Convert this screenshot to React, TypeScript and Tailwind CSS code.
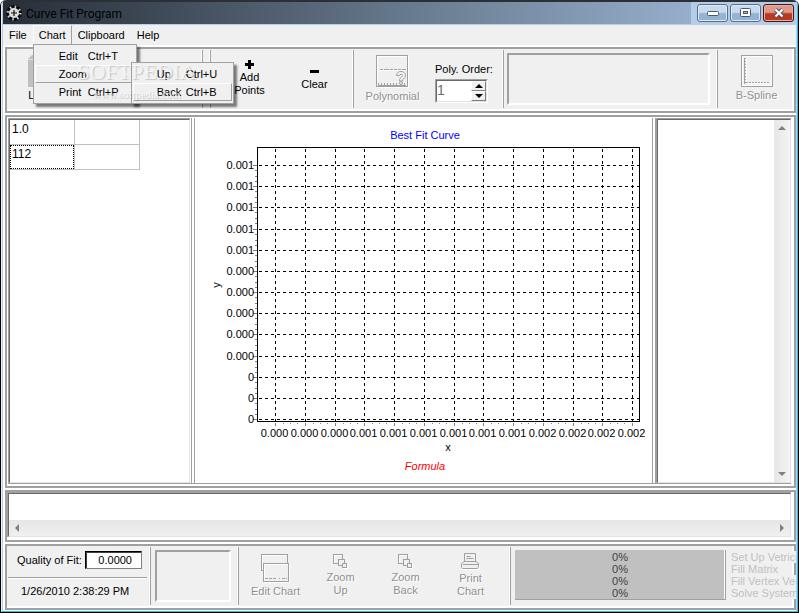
import React from 'react';
import clsx from 'clsx';

interface MenuItem {
  label: string;
  shortcut?: string;
  raised?: boolean;
  children?: MenuItem[];
}

const chartMenu: MenuItem[] = [
  { label: 'Edit', shortcut: 'Ctrl+T' },
  {
    label: 'Zoom',
    raised: true,
    children: [
      { label: 'Up', shortcut: 'Ctrl+U' },
      { label: 'Back', shortcut: 'Ctrl+B', raised: true }
    ]
  },
  { label: 'Print', shortcut: 'Ctrl+P' }
];

const xLabels = ['0.000', '0.000', '0.000', '0.001', '0.001', '0.001', '0.001', '0.001', '0.001', '0.002', '0.002', '0.002', '0.002'];
const yLabels = ['0.001', '0.001', '0.001', '0.001', '0.001', '0.000', '0.000', '0.000', '0.000', '0.000', '0', '0', '0'];
const steps = ['Set Up Vetrices', 'Fill Matrix', 'Fill Vertex Vectors', 'Solve System'];

const GearIcon = () => (
  <svg width="16" height="16" viewBox="0 0 16 16" aria-hidden="true">
    <circle cx="8" cy="8" r="6.5" fill="none" stroke="#0c0c0c" strokeWidth="3" />
    <circle cx="8" cy="8" r="6" fill="none" stroke="#c8c8c8" strokeWidth="3" strokeDasharray="1.5 3.2" />
    <circle cx="8" cy="8" r="5" fill="#dcdcdc" />
    <path d="M8 5v6M5 8h6" stroke="#111" strokeWidth="1.2" />
  </svg>
);

const LinearIcon = () => (
  <svg width="32" height="32" viewBox="0 0 32 32" aria-hidden="true">
    <path d="M0 4l4-4h28v32H0z" fill="#c0c0c0" />
    <path d="M0.5 4.5h28v27" fill="none" stroke="#e3e3e3" />
  </svg>
);

const PolynomialIcon = () => (
  <svg width="33" height="33" viewBox="0 0 33 33" aria-hidden="true" shapeRendering="crispEdges">
    <rect x="1.5" y="1.5" width="31" height="31" fill="none" stroke="#fff" />
    <rect x="0.5" y="0.5" width="31" height="31" rx="1" fill="none" stroke="#a0a0a0" />
    <path d="M4 15.5h25" stroke="#fff" />
    <path d="M4 14.5h3m1 0h5m1 0h3m1 0h3m1 0h3m1 0h4" stroke="#a0a0a0" />
    <path d="M2 30.5h28" stroke="#a0a0a0" />
    <path d="M2.5 28v2m3-2v2m3-2v2m3-2v2m3-2v2m3-2v2m3-2v2m8-2v2" stroke="#a0a0a0" />
    <g shapeRendering="auto" fill="none" stroke="#a0a0a0">
      <path d="M20.500 20.500c0-5.500 9-5.500 9 0 0 3-3 3-3 5.500h-3c0-4 3-4 3-5.500s-3-1.500-3 0z" />
      <circle cx="25" cy="28" r="1.500" />
    </g>
  </svg>
);

const SplineIcon = () => (
  <svg width="32" height="32" viewBox="0 0 32 32" aria-hidden="true" shapeRendering="crispEdges">
    <rect x="1.5" y="1.5" width="29" height="29" fill="none" stroke="#fff" />
    <rect x="0.5" y="0.5" width="31" height="31" rx="1" fill="none" stroke="#a0a0a0" />
    <path d="M5.500 3v25.500H29" fill="none" stroke="#fff" />
    <path d="M3.500 3v26" stroke="#a0a0a0" />
    <path d="M4.500 3v26" stroke="#a0a0a0" strokeDasharray="1 2" />
    <path d="M5 27.500h24" stroke="#a0a0a0" strokeDasharray="2 1" />
  </svg>
);

const EditChartIcon = () => (
  <svg width="29" height="29" viewBox="0 0 29 29" aria-hidden="true" shapeRendering="crispEdges">
    <g fill="none" stroke="#fff">
      <path d="M1.500 18V1.500h25v8" />
      <rect x="3.500" y="10.500" width="25" height="18" />
    </g>
    <g fill="none" stroke="#a0a0a0">
      <path d="M2 16.500H0.500V0.500h26v9" />
      <rect x="2.500" y="9.500" width="25" height="18" />
      <path d="M4 24.500h3m1 0h3m1 0h3m3 0h1m2 0h3m1 0h1" />
    </g>
  </svg>
);

const ZoomIcon = () => (
  <svg width="15" height="15" viewBox="0 0 15 15" aria-hidden="true" shapeRendering="crispEdges">
    <g fill="#f0f0f0" stroke="#a0a0a0">
      <rect x="0.500" y="0.500" width="9" height="9" />
      <rect x="5.500" y="5.500" width="6" height="6" />
      <rect x="9.500" y="9.500" width="4" height="4" />
    </g>
    <path d="M1.500 8.500v-7h7M14.500 10v4.500H10" fill="none" stroke="#fff" />
  </svg>
);

const PrintIcon = () => (
  <svg width="19" height="17" viewBox="0 0 19 17" aria-hidden="true">
    <path d="M1.500 16.500h16l1-1v-4" fill="none" stroke="#fff" />
    <g fill="none" stroke="#a0a0a0">
      <path d="M3.500 8.500V0.500h11v8M5.500 3.500h4M5.500 5.500h7M3 8.500h12l2.500 2v4l-1 1H1.500l-1-1v-4z" />
      <path d="M2 11.500h15" />
    </g>
  </svg>
);

const Arrow = ({ d, color = '#808080' }: { d: string; color?: string }) => (
  <svg width="8" height="8" viewBox="0 0 8 8" aria-hidden="true">
    <path d={d} fill={color} />
  </svg>
);

const ToolButton = ({
  icon,
  disabled,
  children
}: {
  icon: React.ReactNode;
  disabled?: boolean;
  children: React.ReactNode;
}) => (
  <button
    disabled={disabled}
    className={clsx(
      'flex w-[65px] shrink-0 flex-col items-center justify-center gap-0.5 pb-px text-center leading-[13px]',
      disabled && 'text-[#909090] [text-shadow:1px_1px_0_white]'
    )}
  >
    {icon}
    <span className="whitespace-pre-line">{children}</span>
  </button>
);

// Toolbar section closed by an etched line on the right
const Section = ({ className, children }: { className?: string; children?: React.ReactNode }) => (
  <div className={clsx('my-px flex border-r border-[#a0a0a0] shadow-[inset_-1px_0_0_white]', className)}>{children}</div>
);

const ToolFrame = ({ children }: { children: React.ReactNode }) => (
  <div className="border-2 border-[#a0a0a0]">
    <div className="flex h-[62px] border-r-2 border-b-2 border-white bg-[#f0f0f0]">{children}</div>
  </div>
);

const SunkenBox = ({ className }: { className?: string }) => (
  <div className={clsx('my-[3px] border-2 border-t-[#a0a0a0] border-r-white border-b-white border-l-[#a0a0a0]', className)} />
);

const MenuList = ({ items, className }: { items: MenuItem[]; className?: string }) => (
  <ul
    className={clsx(
      'absolute z-10 border border-[#a0a0a0] bg-[#f0f0f0] px-px py-0.5 shadow-[3px_3px_2px_#00000080]',
      className
    )}
  >
    {items.map((item) => (
      <li key={item.label} className="relative">
        <button
          className={clsx(
            'flex h-[18px] w-full items-center border pl-[23px] text-left whitespace-nowrap',
            item.raised ? 'border-t-white border-r-[#a0a0a0] border-b-[#a0a0a0] border-l-white' : 'border-transparent'
          )}
        >
          <span className="w-[29px]">{item.label}</span>
          {item.shortcut}
          {item.children && (
            <span className="ml-auto pr-1">
              <Arrow d="M2 0l4 4-4 4z" color="#fff" />
            </span>
          )}
        </button>
        {item.children && <MenuList items={item.children} className="-top-[3px] left-24 w-[103px]" />}
      </li>
    ))}
  </ul>
);

const TitleBar = () => (
  <header className="flex h-[25px] items-center border-t-2 border-b border-t-[#2b2f38] border-b-[#b8cfe8] bg-linear-to-r from-[#272e38] via-[#66788c] to-[#a9c3e3] pl-[3px]">
    <GearIcon />
    <h1 className="flex-1 pt-px pl-1 font-[Roboto,'Noto_Sans',sans-serif] text-[12px] leading-4 text-black">
      Curve Fit Program
    </h1>
    <div className="flex h-full items-center gap-0.5 bg-[#b4cce6] pr-0.5 pl-1.5">
      <button
        aria-label="Minimize"
        className="flex h-[18px] w-[31px] items-center justify-center rounded-[3px] border border-[#5a6f8a] bg-linear-to-b from-[#c8dbee] from-45% to-[#94b3d2] to-55% shadow-[inset_0_0_0_1px_#dceaf7]"
      >
        <svg width="12" height="6" viewBox="0 0 12 6">
          <rect x="0.500" y="1.500" width="11" height="4" rx="1" fill="#fff" stroke="#4b5868" />
        </svg>
      </button>
      <button
        aria-label="Maximize"
        className="flex h-[18px] w-[31px] items-center justify-center rounded-[3px] border border-[#5a6f8a] bg-linear-to-b from-[#c8dbee] from-45% to-[#94b3d2] to-55% shadow-[inset_0_0_0_1px_#dceaf7]"
      >
        <svg width="12" height="10" viewBox="0 0 12 10">
          <rect x="0.500" y="0.500" width="10" height="8" rx="1" fill="#fff" stroke="#4b5868" />
          <rect x="3.500" y="3.500" width="4" height="2" fill="#9bb8d5" stroke="#4b5868" />
        </svg>
      </button>
      <button
        aria-label="Close"
        className="flex h-[18px] w-[31px] items-center justify-center rounded-[3px] border border-[#4c1210] bg-linear-to-b from-[#dd9a8b] from-45% to-[#b93a24] to-55% shadow-[inset_0_0_0_1px_#e8b0a4]"
      >
        <svg width="12" height="10" viewBox="0 0 12 10">
          <path d="M2.500 1.500l7 7m0-7l-7 7" stroke="#4b4f5c" strokeWidth="4" />
          <path d="M2.500 1.500l7 7m0-7l-7 7" stroke="#fff" strokeWidth="2.200" />
        </svg>
      </button>
    </div>
  </header>
);

const MenuBar = () => (
  <nav className="flex h-5 bg-[#f0f0f0] text-black">
    <button className="px-1.5">File</button>
    <div className="relative flex">
      <button className="border-t border-r border-l border-t-white border-r-[#a0a0a0] border-l-white px-[5px] pb-px">
        Chart
      </button>
      <MenuList items={chartMenu} className="top-[19px] left-0 w-26" />
      <div className="pointer-events-none absolute top-[35px] left-10 z-20 w-32 text-center text-white/70 [text-shadow:1px_1px_1px_#00000030]">
        <p className="font-['Liberation_Serif',serif] text-[22px] leading-6">SOFTPEDIA</p>
        <p className="pt-1 font-['Liberation_Serif',serif] text-[11px] leading-3">www.softpedia.com</p>
      </div>
    </div>
    <button className="px-1.5">Clipboard</button>
    <button className="px-1.5">Help</button>
  </nav>
);

const left = 62;
const right = 444;
const top = 29;
const bottom = 303;
const gridX = (i: number) => Math.round(80 + i * 29.77) + 0.5;
const gridY = (i: number) => Math.round(47 + i * 21.17) + 0.5;

const CurveChart = () => (
  <svg
    width="457"
    height="364"
    viewBox="0 0 457 364"
    role="img"
    aria-label="Best Fit Curve"
    fontSize="11"
    className="shrink-0"
  >
    <g shapeRendering="crispEdges" fill="none">
      {xLabels.map((_, i) => (
        <g key={i}>
          <path d={`M${gridX(i)} ${top + 2}V${bottom}`} stroke="#000" strokeDasharray="3 3" />
          <path d={`M${gridX(i)} ${bottom + 2}v3`} stroke="#808080" />
          {i < xLabels.length - 1 && (
            <path
              d={`M${gridX(i) + 8} ${bottom + 2}v1m7-1v1m7-1v1`}
              stroke="#808080"
            />
          )}
        </g>
      ))}
      {yLabels.map((_, i) => (
        <g key={i}>
          <path d={`M${left + 2} ${gridY(i)}H${right}`} stroke="#000" strokeDasharray="3 3" />
          <path d={`M${left - 4} ${gridY(i)}h4`} stroke="#808080" />
          {i < yLabels.length - 1 && (
            <path d={`M${left - 2} ${gridY(i) + 5}h2m-2 6h2m-2 5h2`} stroke="#808080" />
          )}
        </g>
      ))}
      <rect x={left + 0.5} y={top + 0.5} width={right - left} height={bottom - top} stroke="#000" />
    </g>
    {xLabels.map((label, i) => (
      <text key={i} x={gridX(i) - 1} y="319" textAnchor="middle">
        {label}
      </text>
    ))}
    {yLabels.map((label, i) => (
      <text key={i} x="59" y={gridY(i) + 3.5} textAnchor="end">
        {label}
      </text>
    ))}
    <text x="230" y="21" textAnchor="middle" fill="#0000ff">
      Best Fit Curve
    </text>
    <text x="253" y="333" textAnchor="middle">
      x
    </text>
    <text x="25" y="167" textAnchor="middle" transform="rotate(-90 25 167)">
      y
    </text>
    <text x="230" y="352" textAnchor="middle" fill="#ff0000" fontStyle="italic">
      Formula
    </text>
  </svg>
);

const Splitter = () => <div className="w-1 shrink-0 border-x border-[#a0a0a0]" />;

const DataGrid = () => (
  <div className="mr-px w-[182px] shrink-0 border-t border-l border-[#a0a0a0]">
    <div className="h-full border border-t-[#696969] border-r-[#e3e3e3] border-b-[#e3e3e3] border-l-[#696969]">
      <table className="border-collapse text-[12px] leading-4">
        <tbody>
          {['1.0', '112'].map((value, row) => (
            <tr key={value}>
              <td className="border-r border-b border-[#c0c0c0] p-0">
                <div
                  className={clsx(
                    'h-6 w-16 border pl-px',
                    row === 1 ? 'border-dotted border-black' : 'border-transparent'
                  )}
                >
                  {value}
                </div>
              </td>
              <td className="border-r border-b border-[#c0c0c0] p-0">
                <div className="h-6 w-16" />
              </td>
            </tr>
          ))}
        </tbody>
      </table>
    </div>
  </div>
);

const ResultList = () => (
  <div className="w-[135px] shrink-0 border-t border-l border-[#a0a0a0]">
    <div className="flex h-full justify-end border border-t-[#696969] border-r-[#e3e3e3] border-b-[#e3e3e3] border-l-[#696969]">
      <div className="flex w-4 flex-col justify-between bg-linear-to-r from-[#e6e6e6] to-[#f4f4f4] py-1">
        <button aria-label="Scroll up" className="flex justify-center">
          <Arrow d="M0 6l4-4 4 4z" />
        </button>
        <button aria-label="Scroll down" className="flex justify-center">
          <Arrow d="M0 2l4 4 4-4z" />
        </button>
      </div>
    </div>
  </div>
);

const MessageBox = () => (
  <div className="border-2 border-[#a0a0a0] pr-[3px] pb-[3px]">
    <div className="border-t border-l border-[#a0a0a0]">
      <div className="border border-t-[#696969] border-r-[#e3e3e3] border-b-[#e3e3e3] border-l-[#696969]">
        <textarea aria-label="Formula text" className="block h-[26px] w-full resize-none outline-none" />
        <div className="flex h-4 items-center justify-between bg-linear-to-b from-[#e6e6e6] to-[#f0f0f0] px-1">
          <button aria-label="Scroll left">
            <Arrow d="M6 0L2 4l4 4z" />
          </button>
          <button aria-label="Scroll right">
            <Arrow d="M2 0l4 4-4 4z" />
          </button>
        </div>
      </div>
    </div>
  </div>
);

export default function App() {
  return (
    <div className="flex min-h-screen flex-col overflow-hidden rounded-t-md border-l border-r border-b border-black bg-white font-['Liberation_Sans',Arial,sans-serif] text-[11px] leading-[13px] text-black">
      <div className="flex flex-1 flex-col overflow-hidden border-r border-b border-l border-r-[#35c0e8] border-b-[#35c0e8] border-l-[#e8f0f8]">
        <div className="flex flex-1 flex-col overflow-hidden border-r border-l border-[#b4cdea]">
          <TitleBar />
          <MenuBar />
          <div className="flex flex-1 flex-col gap-0.5 bg-white pt-0.5 pb-px pl-0.5">
            <ToolFrame>
              <Section className="w-[196px] pl-1">
                <ToolButton icon={<LinearIcon />}>Linear</ToolButton>
              </Section>
              <Section className="w-2" />
              <Section className="w-[143px] pl-1.5">
                <ToolButton
                  icon={
                    <svg width="9" height="9" viewBox="0 0 9 9" aria-hidden="true">
                      <path d="M4.500 0v9M0 4.500h9" stroke="#000" strokeWidth="3" />
                    </svg>
                  }
                >
                  {'Add\nPoints'}
                </ToolButton>
                <ToolButton
                  icon={
                    <svg width="9" height="9" viewBox="0 0 9 9" aria-hidden="true">
                      <path d="M0 4.500h9" stroke="#000" strokeWidth="3" />
                    </svg>
                  }
                >
                  Clear
                </ToolButton>
              </Section>
              <Section className="w-[150px] pl-1.5">
                <ToolButton disabled icon={<PolynomialIcon />}>
                  Polynomial
                </ToolButton>
                <div className="ml-2.5 pt-[13px]">
                  <label htmlFor="poly-order" className="block whitespace-nowrap">
                    Poly. Order:
                  </label>
                  <div className="mt-[3px] flex h-6 w-[53px] border border-t-[#a0a0a0] border-r-white border-b-white border-l-[#a0a0a0] bg-white">
                    <div className="flex w-full border border-t-[#696969] border-r-[#e3e3e3] border-b-[#e3e3e3] border-l-[#696969]">
                      <input
                        id="poly-order"
                        defaultValue="1"
                        className="w-8 min-w-0 flex-1 pb-0.5 text-[14px] text-[#6d6d6d] outline-none"
                      />
                      <div className="flex w-[15px] flex-col bg-[#f0f0f0]">
                        <button
                          aria-label="Increase order"
                          className="flex flex-1 items-center justify-center border border-t-white border-r-[#808080] border-b-[#808080] border-l-white"
                        >
                          <Arrow d="M0 6l4-4 4 4z" color="#000" />
                        </button>
                        <button
                          aria-label="Decrease order"
                          className="flex flex-1 items-center justify-center border border-t-white border-r-[#808080] border-b-[#808080] border-l-white"
                        >
                          <Arrow d="M0 2l4 4 4-4z" color="#000" />
                        </button>
                      </div>
                    </div>
                  </div>
                </div>
              </Section>
              <Section className="flex-1 pr-[7px] pl-[3px]">
                <SunkenBox className="flex-1" />
              </Section>
              <div className="flex w-[74px] pl-1.5">
                <ToolButton disabled icon={<SplineIcon />}>
                  B-Spline
                </ToolButton>
              </div>
            </ToolFrame>

            <main className="flex flex-1 flex-col border-2 border-[#a0a0a0] pt-px pr-[3px] pb-0.5 pl-px">
              <div className="flex flex-1 border-b border-[#a0a0a0]">
                <DataGrid />
                <Splitter />
                <div className="flex flex-1 items-start justify-center">
                  <CurveChart />
                </div>
                <Splitter />
                <ResultList />
              </div>
            </main>

            <MessageBox />

            <ToolFrame>
              <Section className="w-36 flex-col pl-px">
                <div className="mr-[3px] flex h-[31px] items-center justify-between border-b border-[#a0a0a0] pr-[5px] pb-1 pl-[9px] shadow-[0_1px_0_white]">
                  <label htmlFor="fit-quality">Quality of Fit:</label>
                  <input
                    id="fit-quality"
                    readOnly
                    defaultValue="0.0000"
                    className="h-[18px] w-[57px] border border-t-black border-r-[#808080] border-b-[#808080] border-l-black bg-white pr-[9px] text-right shadow-[inset_1px_1px_0_#404040] outline-none"
                  />
                </div>
                <time className="flex flex-1 items-center pl-[13px]">1/26/2010 2:38:29 PM</time>
              </Section>
              <Section className="w-[88px] pr-[7px] pl-1">
                <SunkenBox className="flex-1" />
              </Section>
              <Section className="w-[272px] pl-1">
                <ToolButton disabled icon={<EditChartIcon />}>
                  Edit Chart
                </ToolButton>
                <ToolButton disabled icon={<ZoomIcon />}>
                  {'Zoom\nUp'}
                </ToolButton>
                <ToolButton disabled icon={<ZoomIcon />}>
                  {'Zoom\nBack'}
                </ToolButton>
                <ToolButton disabled icon={<PrintIcon />}>
                  {'Print\nChart'}
                </ToolButton>
              </Section>
              <div className="flex-1 pt-1 pr-0.5 pl-1">
                <div className="border-r border-b border-[#a0a0a0] bg-[#c0c0c0] pt-px text-center leading-3 text-[#404040] shadow-[inset_-1px_0_0_white]">
                  {steps.map((step) => (
                    <div key={step} role="progressbar" aria-label={step} aria-valuenow={0}>
                      0%
                    </div>
                  ))}
                </div>
              </div>
              <ul className="w-16 pt-[5px] pl-[3px] leading-3 whitespace-nowrap text-[#c0c0c0]">
                {steps.map((step) => (
                  <li key={step} className="w-max bg-[#f0f0f0]">
                    {step}
                  </li>
                ))}
              </ul>
            </ToolFrame>
          </div>
        </div>
      </div>
    </div>
  );
}
